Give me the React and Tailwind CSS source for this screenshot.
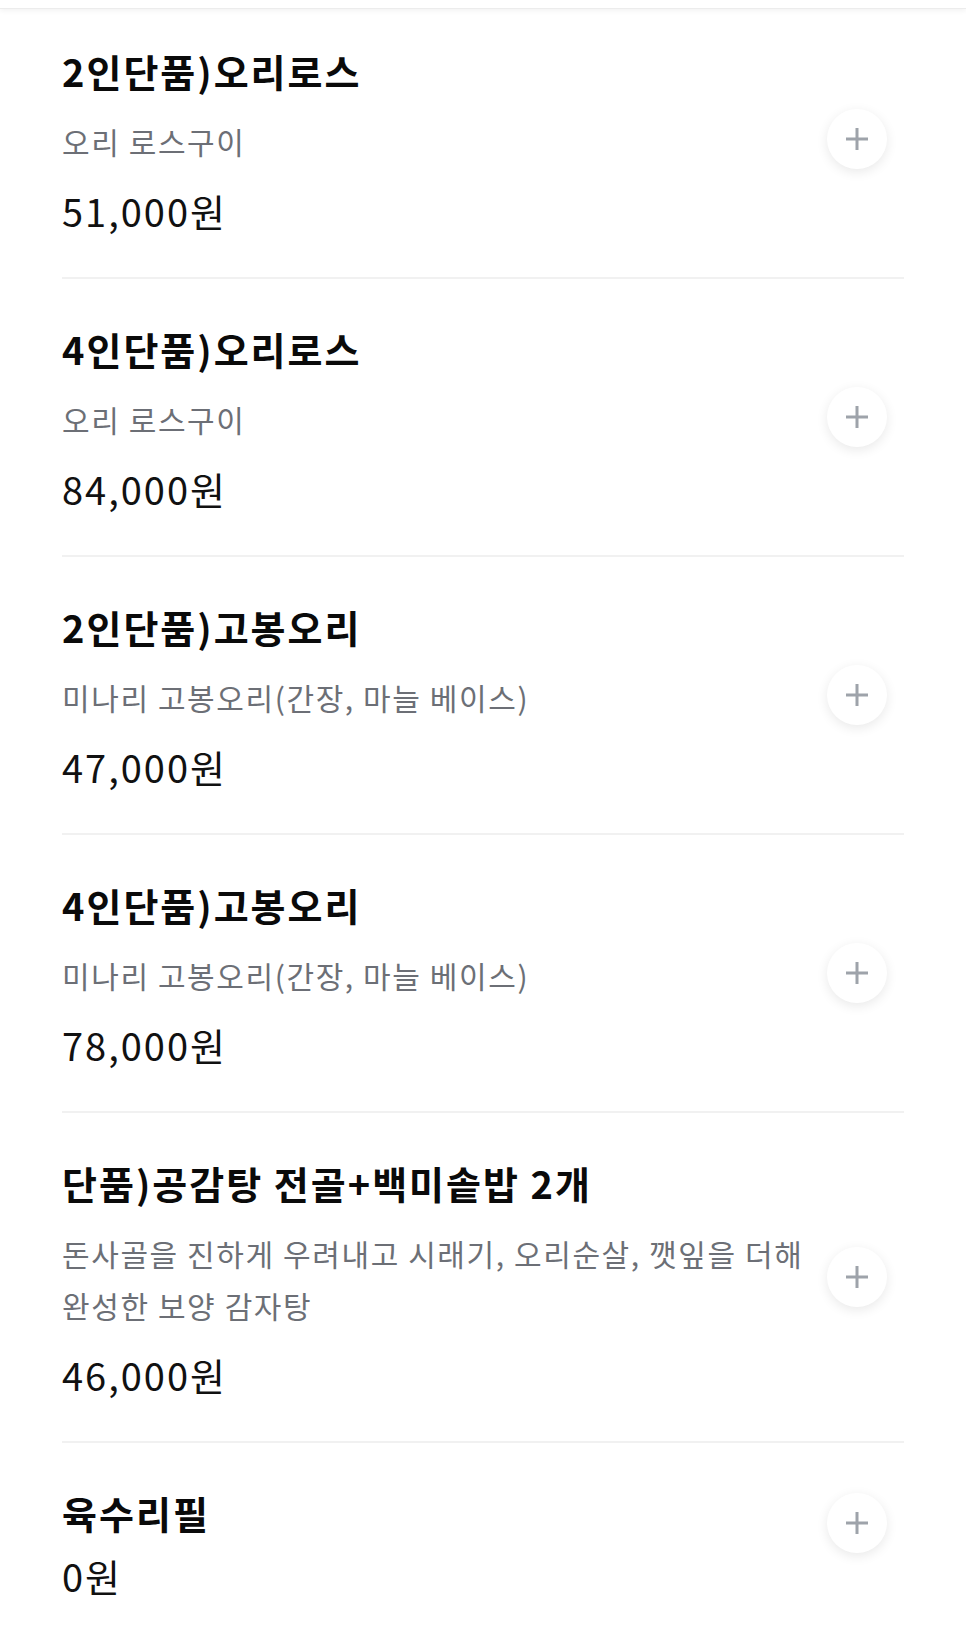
import React from 'react';

const menuItems = [
  { id: 1, name: '2인단품)오리로스', desc: ['오리 로스구이'], price: '51,000원' },
  { id: 2, name: '4인단품)오리로스', desc: ['오리 로스구이'], price: '84,000원' },
  { id: 3, name: '2인단품)고봉오리', desc: ['미나리 고봉오리(간장, 마늘 베이스)'], price: '47,000원' },
  { id: 4, name: '4인단품)고봉오리', desc: ['미나리 고봉오리(간장, 마늘 베이스)'], price: '78,000원' },
  {
    id: 5,
    name: '단품)공감탕 전골+백미솥밥 2개',
    desc: ['돈사골을 진하게 우려내고 시래기, 오리순살, 깻잎을 더해', '완성한 보양 감자탕'],
    price: '46,000원',
  },
  { id: 6, name: '육수리필', desc: [], price: '0원' },
];

const PlusButton = ({ top }) => (
  <button
    className={`flex h-[60px] w-[60px] shrink-0 items-center justify-center rounded-full bg-white shadow-[0_3px_12px_rgba(0,0,0,0.09)] mr-[17px] ${
      top ? 'self-start mt-[2px]' : 'mb-[6px]'
    }`}
  >
    <svg width="24" height="24" viewBox="0 0 24 24" fill="none">
      <path d="M12 1v22M1 12h22" stroke="#9ea3aa" strokeWidth="3" />
    </svg>
  </button>
);

const App = () => {
  return (
    <div
      className="min-h-screen bg-white"
      style={{ fontFamily: '"Noto Sans CJK KR", "Noto Sans", sans-serif' }}
    >
      {/* header edge */}
      <div className="h-[9px] border-b border-[#ececec] shadow-[0_2px_5px_rgba(0,0,0,0.05)]"></div>

      <div className="px-[62px]">
        {menuItems.map((item, idx) => (
          <div key={item.id}>
            {idx > 0 && <div className="h-[2px] bg-[#f1f1f1]"></div>}
            <div
              className={`flex items-center gap-2 ${idx === 0 ? 'pt-[40px]' : 'pt-[48px]'} pb-[43px]`}
            >
              <div className="min-w-0 flex-1">
                <div className="text-[38px] font-bold leading-[44px] text-[#0a0a0a] tracking-[2px]">
                  {item.name}
                </div>
                {item.desc.length > 0 && (
                  <div className="mt-[22px] text-[30px] leading-[52px] text-[#6c6f76] tracking-[1.6px]">
                    {item.desc.map((line) => (
                      <div key={line} className="whitespace-nowrap">{line}</div>
                    ))}
                  </div>
                )}
                <div
                  className={`${item.desc.length > 0 ? 'mt-[21px]' : 'mt-[18px]'} text-[38px] leading-[46px] text-[#111111] tracking-[2px]`}
                >
                  {item.price}
                </div>
              </div>
              <PlusButton top={item.desc.length === 0} />
            </div>
          </div>
        ))}
      </div>
    </div>
  );
};

export default App;
